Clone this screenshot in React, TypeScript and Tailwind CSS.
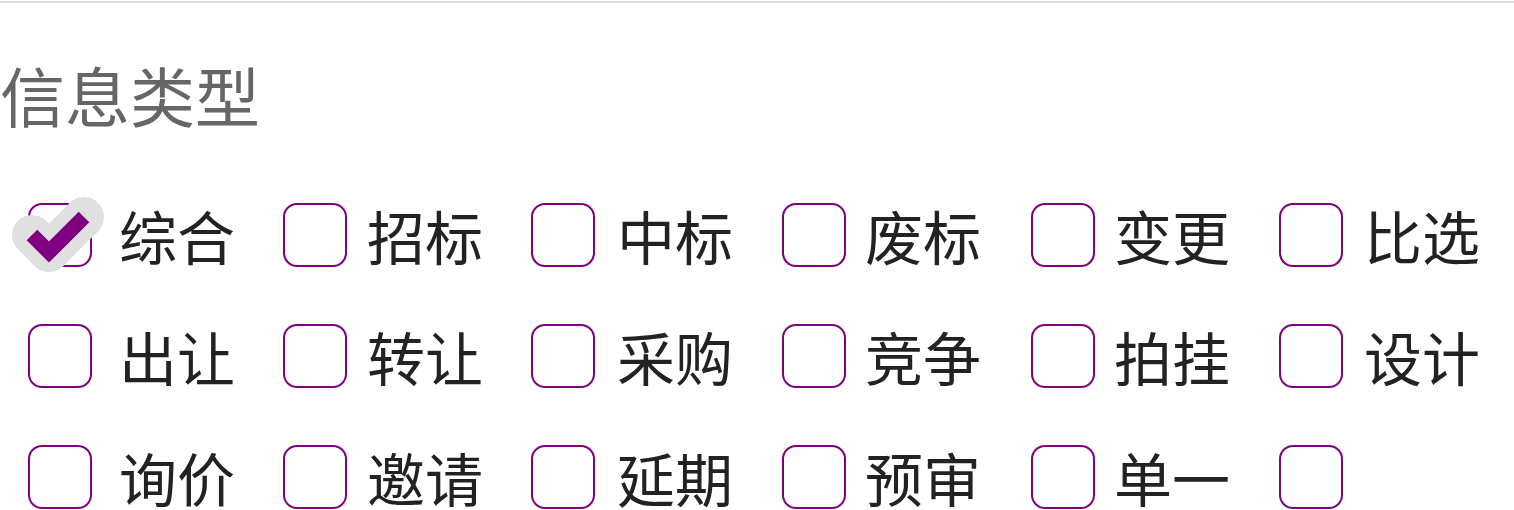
const types = [
    "综合", "招标", "中标", "废标", "变更", "比选",
    "出让", "转让", "采购", "竞争", "拍挂", "设计",
    "询价", "邀请", "延期", "预审", "单一", "",
];

// gap between box and label differs a little per column in the original
const labelGap = ["ml-[27px]", "ml-[20px]", "ml-[22px]", "ml-[19px]", "ml-[19px]", "ml-[21px]"];

const font = { fontFamily: '"Noto Sans CJK SC", "Noto Sans", sans-serif' };

const CheckMark = () => (
    <svg className="absolute left-[-28px] top-[-20px]" width="120" height="110" viewBox="0 0 120 110">
        <polyline points="30,50 47,67 82,32" fill="none" stroke="#e0e0e0" strokeWidth="40" strokeLinecap="round" strokeLinejoin="round"/>
        <polyline points="30,50 47,67 82,32" fill="none" stroke="#800080" strokeWidth="15" strokeLinejoin="miter"/>
    </svg>
);

const TypeOption = ({label, checked, gap}: {label: string; checked: boolean; gap: string}) => (
    <label className="flex items-center h-[64px]">
        <span className="relative w-[64px] h-[64px] shrink-0 rounded-[14px] border-2 border-[#800080] bg-white">
            {checked && <CheckMark/>}
        </span>
        <span className={`${gap} text-[58px] leading-none text-[#222]`}>{label}</span>
    </label>
);

export default function App() {
    return (
        <div className="w-[1514px] h-[510px] bg-white overflow-hidden" style={font}>
            <div className="mt-px h-[2px] bg-[#dcdcdc]"/>
            <div className="mt-[59px] text-[65px] leading-none text-[#666]">信息类型</div>
            <div className="mt-[76px] pl-[28px] grid grid-cols-[255px_248px_251px_249px_248px_1fr] gap-y-[57px]">
                {types.map((t, i) => (
                    <TypeOption key={i} label={t} checked={i === 0} gap={labelGap[i % 6]}/>
                ))}
            </div>
        </div>
    );
}
